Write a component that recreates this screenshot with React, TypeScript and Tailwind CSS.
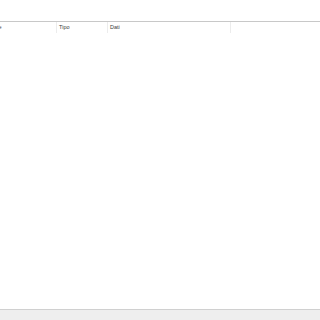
export default function App() {
  return (
    <div className="w-[320px] h-[320px] bg-white flex flex-col overflow-hidden" style={{ fontFamily: '"Liberation Sans", Arial, sans-serif' }}>
      <div className="h-[21px]" />
      <div className="border-t border-[#c8c8c8] flex h-[12px] text-[5.5px] text-[#3a3a3a] items-center overflow-hidden">
        <div className="w-[57px] h-full flex items-center border-r border-[#ececec] overflow-hidden">
          <span className="ml-[-13px]">Nome</span>
        </div>
        <div className="w-[51px] h-full flex items-center border-r border-[#ececec] pl-[2px]">Tipo</div>
        <div className="w-[123px] h-full flex items-center border-r border-[#ececec] pl-[2px]">Dati</div>
        <div className="flex-1" />
      </div>
      <div className="flex-1" />
      <div className="h-[11px] border-t border-[#d0d0d0] bg-[#eeeeee]" />
    </div>
  );
}
